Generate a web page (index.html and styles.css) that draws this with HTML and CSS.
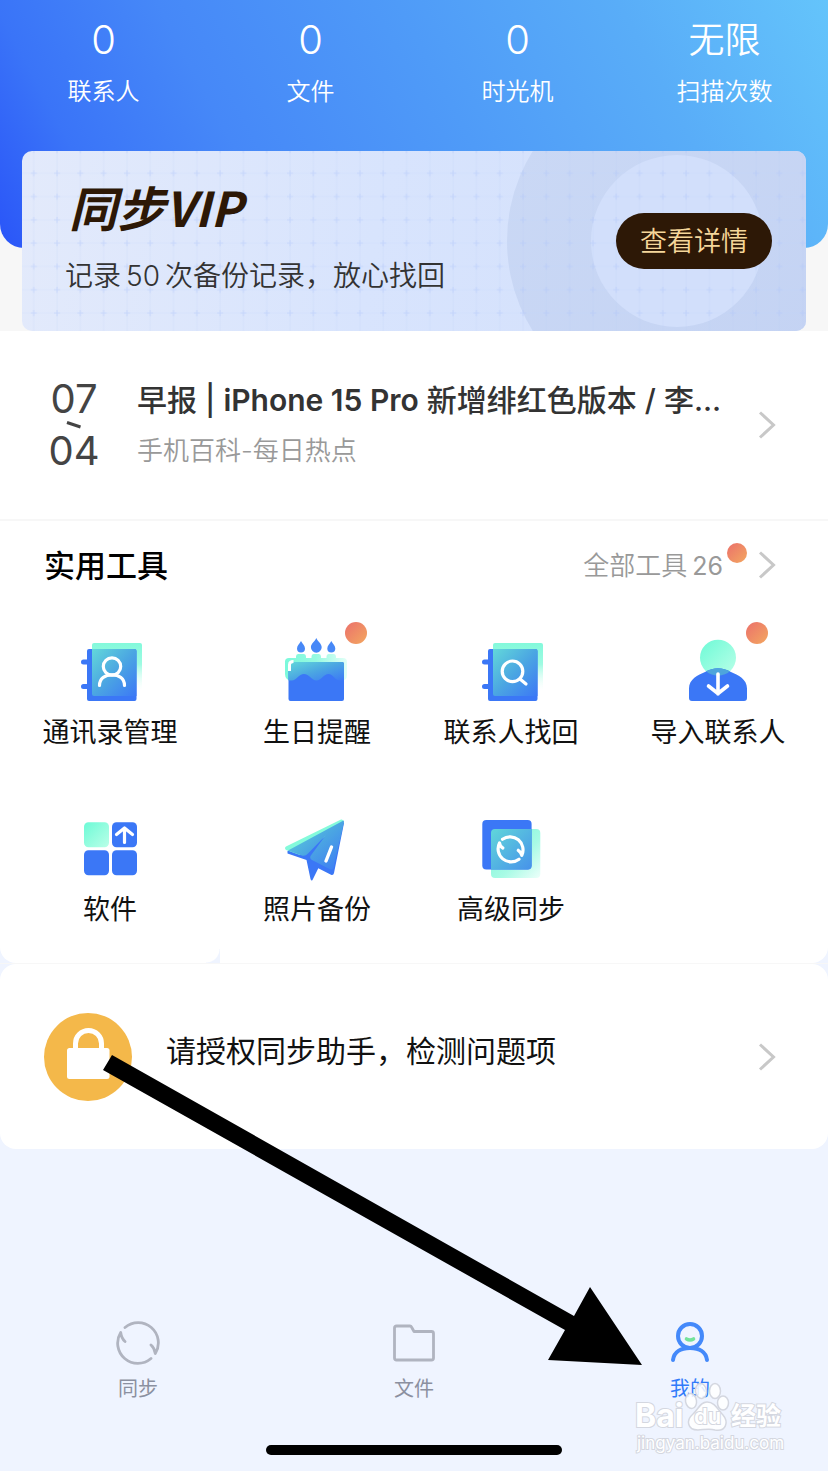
FILE: index.html
```html
<!DOCTYPE html>
<html lang="zh-CN">
<head>
<meta charset="utf-8">
<meta name="viewport" content="width=device-width, initial-scale=1">
<title>同步助手</title>
<link rel="stylesheet" href="styles.css">
</head>
<body>
<svg class="defs" width="0" height="0" aria-hidden="true">
  <defs>
    <linearGradient id="mint" x1="0" y1="0" x2="1" y2="1">
      <stop offset="0" stop-color="#6dfad6"/><stop offset="1" stop-color="#baffe8"/>
    </linearGradient>
    <linearGradient id="mintFade" x1="0" y1="0" x2="0" y2="1">
      <stop offset="0" stop-color="#83f9db"/><stop offset=".4" stop-color="#9ffbe2"/><stop offset=".9" stop-color="#e9fff8" stop-opacity="0"/>
    </linearGradient>
    <linearGradient id="mintSoft" x1="0" y1="0" x2="1" y2="1">
      <stop offset="0" stop-color="#74f5d6"/><stop offset=".6" stop-color="#a8fbe5"/><stop offset="1" stop-color="#edfffa"/>
    </linearGradient>
    <linearGradient id="glass" x1="0" y1="0" x2="1" y2="1">
      <stop offset="0" stop-color="#62d8da"/><stop offset=".5" stop-color="#4ba6e2"/><stop offset="1" stop-color="#3c78f6"/>
    </linearGradient>
    <linearGradient id="frost" x1="0" y1="0" x2="1" y2="0">
      <stop offset="0" stop-color="#7bf9db"/><stop offset=".5" stop-color="#96fae1"/><stop offset="1" stop-color="#e2fff7"/>
    </linearGradient>
  </defs>
</svg>

<main class="page">
  <header class="hero">
    <dl class="stats">
      <div class="stat"><dd>0</dd><dt>联系人</dt></div>
      <div class="stat"><dd>0</dd><dt>文件</dt></div>
      <div class="stat"><dd>0</dd><dt>时光机</dt></div>
      <div class="stat"><dd class="word">无限</dd><dt>扫描次数</dt></div>
    </dl>
  </header>

  <div class="vip-wrap">
    <section class="vip">
      <svg class="vip-art" viewBox="0 0 784 180" preserveAspectRatio="xMaxYMid slice" aria-hidden="true">
        <defs>
          <linearGradient id="ring" x1="0" y1="0" x2="1" y2="1">
            <stop offset="0" stop-color="#cbd9f5"/><stop offset="1" stop-color="#c3d2f3"/>
          </linearGradient>
          <pattern id="grid" x="0" y="10.6" width="23.3" height="23.3" patternUnits="userSpaceOnUse">
            <path d="M11.7 0V23.3M0 11.7H23.3" stroke="#b9cdf8" stroke-opacity=".18"/>
            <path d="M11.7 8.7v6M8.7 11.7h6" stroke="#a9c1f8" stroke-opacity=".4"/>
          </pattern>
        </defs>
        <circle cx="655" cy="90" r="170" fill="url(#ring)"/>
        <circle cx="655" cy="90" r="86" fill="#d2dffb"/>
        <rect width="784" height="180" fill="url(#grid)"/>
      </svg>
      <div class="vip-text">
        <h1 class="vip-title">同步VIP</h1>
        <p class="vip-desc">记录<span>50</span>次备份记录，放心找回</p>
      </div>
      <button class="vip-btn" type="button">查看详情</button>
    </section>
  </div>

  <a class="news" href="#news">
    <span class="date">
      <span>07</span>
      <svg class="dash" viewBox="0 0 16 8" aria-hidden="true"><path d="M1 1.500L14.500 6" stroke="#444" stroke-width="3"/></svg>
      <span>04</span>
    </span>
    <span class="news-text">
      <strong>早报 | <b>iPhone 15 Pro</b> 新增绯红色版本 / 李...</strong>
      <small>手机百科-每日热点</small>
    </span>
    <svg class="chevron" viewBox="0 0 18 28" aria-hidden="true"><path d="M2 1.500l13.500 12.500L2 26.500"/></svg>
  </a>

  <section class="tools">
    <div class="tools-head">
      <h2>实用工具</h2>
      <a class="all" href="#tools">
        <span class="all-text">全部工具<b>26</b></span>
        <i class="dot dot-small"></i>
        <svg class="chevron" viewBox="0 0 18 28" aria-hidden="true"><path d="M2 1.500l13.500 12.500L2 26.500"/></svg>
      </a>
    </div>
    <nav class="grid">
      <a class="tool" href="#contacts">
        <span class="tool-icon">
          <svg viewBox="0 0 64 64" aria-hidden="true">
            <rect x="14" y="4" width="50" height="53" rx="2" fill="url(#mintFade)"/>
            <path d="M5.500 20.500H12v5H5.500a2.500 2.500 0 0 1 0-5zM5.500 45H12v5H5.500a2.500 2.500 0 0 1 0-5z" fill="#3b77f6"/>
            <rect x="9" y="10" width="49.500" height="52" rx="2" fill="#3b77f6"/>
            <path d="M14 10H56.500a2 2 0 0 1 2 2V57H16a2 2 0 0 1-2-2z" fill="url(#glass)"/>
            <g fill="none" stroke="#fff" stroke-width="3.200" stroke-linecap="round"><circle cx="34" cy="27.500" r="8.700"/><path d="M21.500 46.500C21.500 39.500 27 35.800 34 35.800S46.500 39.500 46.500 46.500"/></g>
          </svg>
        </span>
        通讯录管理
      </a>
      <a class="tool" href="#birthday">
        <span class="tool-icon">
          <svg viewBox="0 0 64 64" aria-hidden="true">
            <g fill="#4788f7"><path d="M16 2c1.500 3 4 4.500 4 7.500a4 4 0 0 1-8 0C12 6.500 14.500 5 16 2zM31.300-1c1.900 4 5.400 5.700 5.400 9.300a5.400 5.400 0 0 1-10.800 0C25.900 4.700 29.400 3 31.300-1zM46.300 2c1.500 3 4 4.500 4 7.500a4 4 0 0 1-8 0C42.300 6.500 44.800 5 46.300 2z"/></g>
            <path d="M0 22.500Q0 19 4 19H11V17.500Q11 15 13 15H19Q21 15 21 17.500V19H26.500V17.500Q26.500 15 28.500 15H34Q36 15 36 17.500V19H41.500V17.500Q41.500 15 43.500 15H49Q51 15 51 17.500V19H58Q62 19 62 23V36Q62 42 55 42H7Q0 41 0 35z" fill="url(#frost)"/>
            <path d="M3.500 25a2 2 0 0 1 2-2H57a2 2 0 0 1 2 2V60a2 2 0 0 1-2 2H5.500a2 2 0 0 1-2-2z" fill="#3b77f6"/>
            <path d="M3.500 25a2 2 0 0 1 2-2H57a2 2 0 0 1 2 2V41.500H55C50 41.500 48 35 43.500 35S36 41.500 31.500 41.500 24 35 19 35 11 41.500 7 41.500H3.500z" fill="url(#glass)"/>
            <path d="M4.500 32V25.500Q4.500 22.500 8.500 22.500" fill="none" stroke="#fff" stroke-width="3"/>
          </svg>
          <i class="dot dot-tool"></i>
        </span>
        生日提醒
      </a>
      <a class="tool" href="#recover">
        <span class="tool-icon">
          <svg viewBox="0 0 64 64" aria-hidden="true">
            <rect x="14" y="4" width="50" height="53" rx="2" fill="url(#mintFade)"/>
            <path d="M5.500 20.500H12v5H5.500a2.500 2.500 0 0 1 0-5zM5.500 45H12v5H5.500a2.500 2.500 0 0 1 0-5z" fill="#3b77f6"/>
            <rect x="9" y="10" width="49.500" height="52" rx="2" fill="#3b77f6"/>
            <path d="M14 10H56.500a2 2 0 0 1 2 2V57H16a2 2 0 0 1-2-2z" fill="url(#glass)"/>
            <g fill="none" stroke="#fff" stroke-width="3.200" stroke-linecap="round"><circle cx="33.500" cy="32.300" r="10.300"/><path d="M41 40L47 45"/></g>
          </svg>
        </span>
        联系人找回
      </a>
      <a class="tool" href="#import">
        <span class="tool-icon">
          <svg viewBox="0 0 64 64" aria-hidden="true">
            <defs><clipPath id="head"><circle cx="32" cy="18.700" r="18"/></clipPath></defs>
            <circle cx="32" cy="18.700" r="18" fill="url(#mint)"/>
            <path d="M3 59V49.500C3 40 12 36 19 33 28 28 36 28 45 33 52 36 61 40 61 49.500V59a3 3 0 0 1-3 3H6a3 3 0 0 1-3-3z" fill="#3b77f6"/>
            <path d="M12 37.500V36.500L19 33C28 28 36 28 45 33L52 36.500V37.500z" fill="#4ea5dc" clip-path="url(#head)"/>
            <path d="M32 35V55M22.500 47L32 54.500 41.500 47" fill="none" stroke="#fff" stroke-width="3.600" stroke-linecap="round" stroke-linejoin="round"/>
          </svg>
          <i class="dot dot-tool"></i>
        </span>
        导入联系人
      </a>
      <a class="tool tool-corner" href="#apps">
        <span class="tool-icon">
          <svg viewBox="0 0 64 64" aria-hidden="true">
            <rect x="6" y="6.300" width="25" height="25" rx="4.500" fill="url(#mint)"/>
            <g fill="#3b77f6"><rect x="34" y="6.300" width="25" height="25" rx="4.500"/><rect x="6" y="34.300" width="25" height="25" rx="4.500"/><rect x="34" y="34.300" width="25" height="25" rx="4.500"/></g>
            <path d="M46.500 26.500V12M38.500 18.500L46.500 12 54.500 18.500" fill="none" stroke="#fff" stroke-width="3.200" stroke-linecap="round" stroke-linejoin="round"/>
          </svg>
        </span>
        软件
      </a>
      <a class="tool" href="#photos">
        <span class="tool-icon">
          <svg viewBox="0 0 64 64" aria-hidden="true">
            <path d="M58 6L2.500 35V37.500L21.500 44 25.500 63Q26.700 66 28 63L33.300 52.300 46 58.700Q48.500 59.500 49 57L59 7z" fill="#3b77f6"/>
            <path d="M56 3.500L1 30.500Q-1 32 1 34L15 39 59 6Q58.500 3 56 3.500z" fill="#84fadb"/>
            <path d="M58.500 4.500L3 34.500 17.500 39.700Q20.500 40.500 23 37.500L40.500 19.500 25.500 40Q24.500 42.500 27 44L45.500 53.500Q48 54 48.500 52L59 6z" fill="url(#glass)"/>
            <path d="M46.500 31L41 45" stroke="#fff" stroke-width="3.400" stroke-linecap="round"/>
          </svg>
        </span>
        照片备份
      </a>
      <a class="tool" href="#sync">
        <span class="tool-icon">
          <svg viewBox="0 0 64 64" aria-hidden="true">
            <defs><linearGradient id="syncGlass" x1="0" y1="0" x2="1" y2="1"><stop offset="0" stop-color="#60d6da"/><stop offset="1" stop-color="#4792ea"/></linearGradient></defs>
            <rect x="12" y="13" width="49.300" height="49" rx="4" fill="url(#mintSoft)"/>
            <rect x="3.300" y="4" width="49.300" height="49.500" rx="4" fill="#3b77f6"/>
            <path d="M16 13H52.600V49.500a4 4 0 0 1-4 4H12V17a4 4 0 0 1 4-4z" fill="url(#syncGlass)"/>
            <g fill="none" stroke="#fff" stroke-width="3.200" stroke-linecap="round" stroke-linejoin="round">
              <path d="M23.500 23.200A13 13 0 0 1 42.800 39.300Q42 36 39.300 34.300"/>
              <path d="M40 43.200A13 13 0 0 1 20.500 27Q21 30.500 23.800 32"/>
            </g>
          </svg>
        </span>
        高级同步
      </a>
    </nav>
  </section>

  <a class="auth" href="#auth">
    <svg class="lock" viewBox="0 0 88 88" aria-hidden="true">
      <circle cx="44" cy="44" r="44" fill="#f4b84a"/>
      <rect x="23" y="35" width="42.500" height="31" rx="2.500" fill="#fff"/>
      <path d="M31.500 37V30.500a13 13 0 0 1 26 0V37" fill="none" stroke="#fff" stroke-width="5"/>
    </svg>
    <span class="auth-text">请授权同步助手，检测问题项</span>
    <svg class="chevron" viewBox="0 0 18 28" aria-hidden="true"><path d="M2 1.500l13.500 12.500L2 26.500"/></svg>
  </a>

  <footer class="bottom">
    <nav class="tabs">
      <a class="tab" href="#tab-sync">
        <svg viewBox="0 0 44 44" aria-hidden="true"><g fill="none" stroke="#b0b4c0" stroke-width="2.800" stroke-linecap="round" stroke-linejoin="round"><path d="M9 6.500A20.200 20.200 0 0 1 39.300 32.500Q38.500 27 35 24"/><path d="M35 37.500A20.200 20.200 0 0 1 4.700 11.500Q5.500 17.500 9 20.500"/></g></svg>
        同步
      </a>
      <a class="tab" href="#tab-files">
        <svg viewBox="0 0 44 44" aria-hidden="true"><path d="M4.500 5H18Q19 5 19.500 6L22 10.500H39.500Q41.500 10.500 41.500 12.500V37Q41.500 39 39.500 39H4.500Q2.500 39 2.500 37V7Q2.500 5 4.500 5z" fill="none" stroke="#b0b4c0" stroke-width="2.800" stroke-linejoin="round"/></svg>
        文件
      </a>
      <a class="tab active" href="#tab-me" aria-current="page">
        <svg viewBox="0 0 44 44" aria-hidden="true"><g fill="none" stroke-linecap="round"><g stroke="#4489fa" stroke-width="4"><circle cx="22" cy="15" r="12"/><path d="M5 39C6 31 13 27 22 27S38 31 39 39"/></g><path d="M18.500 18Q22 20 25.500 18" stroke="#74e29b" stroke-width="3.600"/></g></svg>
        我的
      </a>
    </nav>
    <div class="home-bar"></div>
    <svg class="watermark" viewBox="0 0 160 80" aria-hidden="true">
      <g fill="#fff" fill-opacity=".85" stroke="#d4d7e0" stroke-width="1.500">
        <ellipse cx="59" cy="20" rx="5.500" ry="7.500" transform="rotate(-10 59 20)"/>
        <ellipse cx="69" cy="10" rx="5.500" ry="7.500" transform="rotate(-8 69 10)"/>
        <ellipse cx="83" cy="10" rx="5.500" ry="7.500"/>
        <ellipse cx="91" cy="22" rx="5.500" ry="7"/>
        <path d="M75 21C68 21 66 29 61 33 54 39 55 49 66 49 71 49 77 47 83 49 94 51 97 41 91 34 86 29 83 21 75 21z"/>
      </g>
      <g class="wm-text">
        <text x="3" y="46" class="wm-bai">Bai</text>
        <text x="62" y="43" class="wm-du">du</text>
        <text x="99" y="44" class="wm-cn">经验</text>
        <text x="5" y="68" class="wm-url">jingyan.baidu.com</text>
      </g>
    </svg>
  </footer>

  <svg class="arrow" viewBox="0 0 545 320" aria-hidden="true"><path d="M12 4L474 265 490 236 542 314 448 309 465 279 3 19z"/></svg>
</main>
</body>
</html>
```
FILE: styles.css
```css
* {
  box-sizing: border-box;
}

body {
  margin: 0;
  background: #eff4ff;
  color: #111;
  font-family: Inter, "Noto Sans CJK SC", sans-serif;
}

a {
  color: inherit;
  text-decoration: none;
}

h1, h2, p, dl, dd {
  margin: 0;
}

.defs {
  position: absolute;
}

.page {
  position: relative;
  display: flex;
  flex-direction: column;
  min-height: 100vh;
  overflow: hidden;
}

.hero {
  position: relative;
  padding: 16px 0 140px;
}

.hero::before {
  content: "";
  position: absolute;
  inset: 0;
  border-radius: 0 0 24px 24px;
  background: linear-gradient(62deg, #2a55f8 0%, #3a74f8 13%, #4688f8 30%, #4f9bf8 55%, #59adf8 78%, #64c4fb 100%);
}

.hero,
.vip-wrap {
  background: #f7f7f7;
}

.stats {
  position: relative;
  display: grid;
  grid-template-columns: repeat(4, 1fr);
  color: #fff;
  text-align: center;
}

.stat dd {
  font-size: 40px;
  font-weight: 350;
  line-height: 48px;
}

.stat .word {
  font-size: 36px;
}

.stat dt {
  margin-top: 12px;
  font-size: 24px;
  font-weight: 350;
  line-height: 32px;
}

.vip-wrap {
  padding: 0 22px;
}

.vip {
  position: relative;
  display: flex;
  align-items: center;
  justify-content: space-between;
  height: 180px;
  margin-top: -97px;
  padding: 0 34px 0 43px;
  overflow: hidden;
  border-radius: 10px;
  background: linear-gradient(100deg, #e3eafb, #d8e4fd 45%, #d2dffb);
}

.vip-art {
  position: absolute;
  inset: 0;
  width: 100%;
  height: 100%;
}

.vip-text {
  position: relative;
  padding-bottom: 12px;
}

.vip-title {
  padding-left: 4px;
  color: #2d1806;
  font-family: "Noto Sans CJK SC", sans-serif;
  font-size: 48px;
  font-style: italic;
  font-weight: 700;
  line-height: 64px;
}

.vip-desc {
  margin-top: 18px;
  color: #333;
  font-size: 28px;
  font-weight: 350;
  line-height: 40px;
}

.vip-desc span {
  margin: 0 5px;
}

.vip-btn {
  position: relative;
  height: 56px;
  padding: 0 24px 4px;
  border: 0;
  border-radius: 28px;
  background: #2d1806;
  color: #f5d69a;
  font-family: inherit;
  font-size: 27px;
  font-weight: 350;
}

.chevron {
  flex: none;
  width: 18px;
  height: 28px;
  fill: none;
  stroke: #c8c8c8;
  stroke-width: 3;
}

.news {
  display: flex;
  align-items: center;
  height: 190px;
  padding: 0 52px 0 44px;
  border-bottom: 2px solid #f7f7f7;
  background: #fff;
}

.date {
  display: flex;
  flex: none;
  flex-direction: column;
  align-items: center;
  width: 60px;
  color: #444;
  font-size: 40px;
  line-height: 44px;
}

.dash {
  width: 16px;
  height: 8px;
}

.news-text {
  display: flex;
  flex: 1;
  flex-direction: column;
  gap: 12px;
  min-width: 0;
  padding: 0 24px 0 33px;
  white-space: nowrap;
}

.news-text strong {
  overflow: hidden;
  color: #333;
  font-size: 30px;
  font-weight: 500;
  line-height: 40px;
}

.news-text b {
  font-weight: 600;
}

.news-text small {
  color: #999;
  font-size: 26px;
  font-weight: 350;
  line-height: 38px;
}

.tools {
  border-bottom: 1px solid #f7f7f7;
}

.tools-head {
  display: flex;
  align-items: center;
  justify-content: space-between;
  height: 88px;
  padding: 0 52px 0 44px;
  background: #fff;
}

.tools-head h2 {
  padding-bottom: 4px;
  color: #000;
  font-size: 31px;
  font-weight: 500;
}

.all {
  display: flex;
  align-items: center;
  color: #999;
  font-size: 26px;
  font-weight: 350;
}

.all-text {
  padding-bottom: 4px;
}

.all b {
  margin-left: 5px;
  font-weight: 400;
  font-size: 25px;
}

.dot {
  border-radius: 50%;
  background: linear-gradient(135deg, #eb706b, #f3a860);
}

.dot-small {
  width: 20px;
  height: 20px;
  margin: 0 11px 24px 4px;
}

.grid {
  display: grid;
  grid-template-columns: 220fr 194fr 194fr 220fr;
  border-radius: 0 0 16px 16px;
  background: #fff;
}

.tool {
  position: relative;
  display: flex;
  flex-direction: column;
  align-items: center;
  gap: 16px;
  padding: 30px 0 39px;
  font-size: 27px;
  line-height: 28px;
}

.tool-icon {
  position: relative;
  width: 64px;
  height: 64px;
}

.tool-icon svg {
  display: block;
  overflow: visible;
}

.dot-tool {
  position: absolute;
  top: -17px;
  left: 60px;
  width: 22px;
  height: 22px;
}

/* Rounded inner corner of the first tile in the last row. */
.tool-corner::after {
  content: "";
  position: absolute;
  right: 0;
  bottom: 0;
  width: 14px;
  height: 14px;
  background: radial-gradient(circle at 0 0, #fff 13px, #eff4ff 14px);
}

.auth {
  display: flex;
  align-items: center;
  height: 185px;
  padding: 0 52px 0 44px;
  border-radius: 16px;
  background: #fff;
}

.lock {
  flex: none;
  width: 88px;
  height: 88px;
}

.auth-text {
  flex: 1;
  padding: 0 24px 12px 34px;
  font-size: 30px;
  line-height: 40px;
}

.bottom {
  position: relative;
  margin-top: auto;
  padding-bottom: 16px;
}

.tabs {
  display: grid;
  grid-template-columns: repeat(3, 1fr);
}

.tab {
  display: flex;
  flex-direction: column;
  align-items: center;
  gap: 12px;
  color: #8b90a0;
  font-size: 20px;
  line-height: 24px;
}

.tab svg {
  width: 44px;
  height: 44px;
}

.tab.active {
  color: #327bfa;
}

.home-bar {
  width: 296px;
  height: 10px;
  margin: 44px auto 0;
  border-radius: 5px;
  background: #000;
}

.watermark {
  position: absolute;
  right: 36px;
  bottom: 10px;
  width: 160px;
  height: 80px;
}

.wm-text {
  fill: #fff;
  stroke: #d4d7e0;
  stroke-width: 2px;
  paint-order: stroke;
  font-family: Inter, "Noto Sans CJK SC", sans-serif;
}

.wm-bai {
  font-size: 32px;
  font-weight: 700;
}

.wm-du {
  font-size: 22px;
  font-weight: 600;
}

.wm-cn {
  font-size: 25px;
  font-weight: 700;
}

.wm-url {
  font-size: 17px;
}

.arrow {
  position: absolute;
  top: 1051px;
  left: 100px;
  width: 545px;
  height: 320px;
}
```
